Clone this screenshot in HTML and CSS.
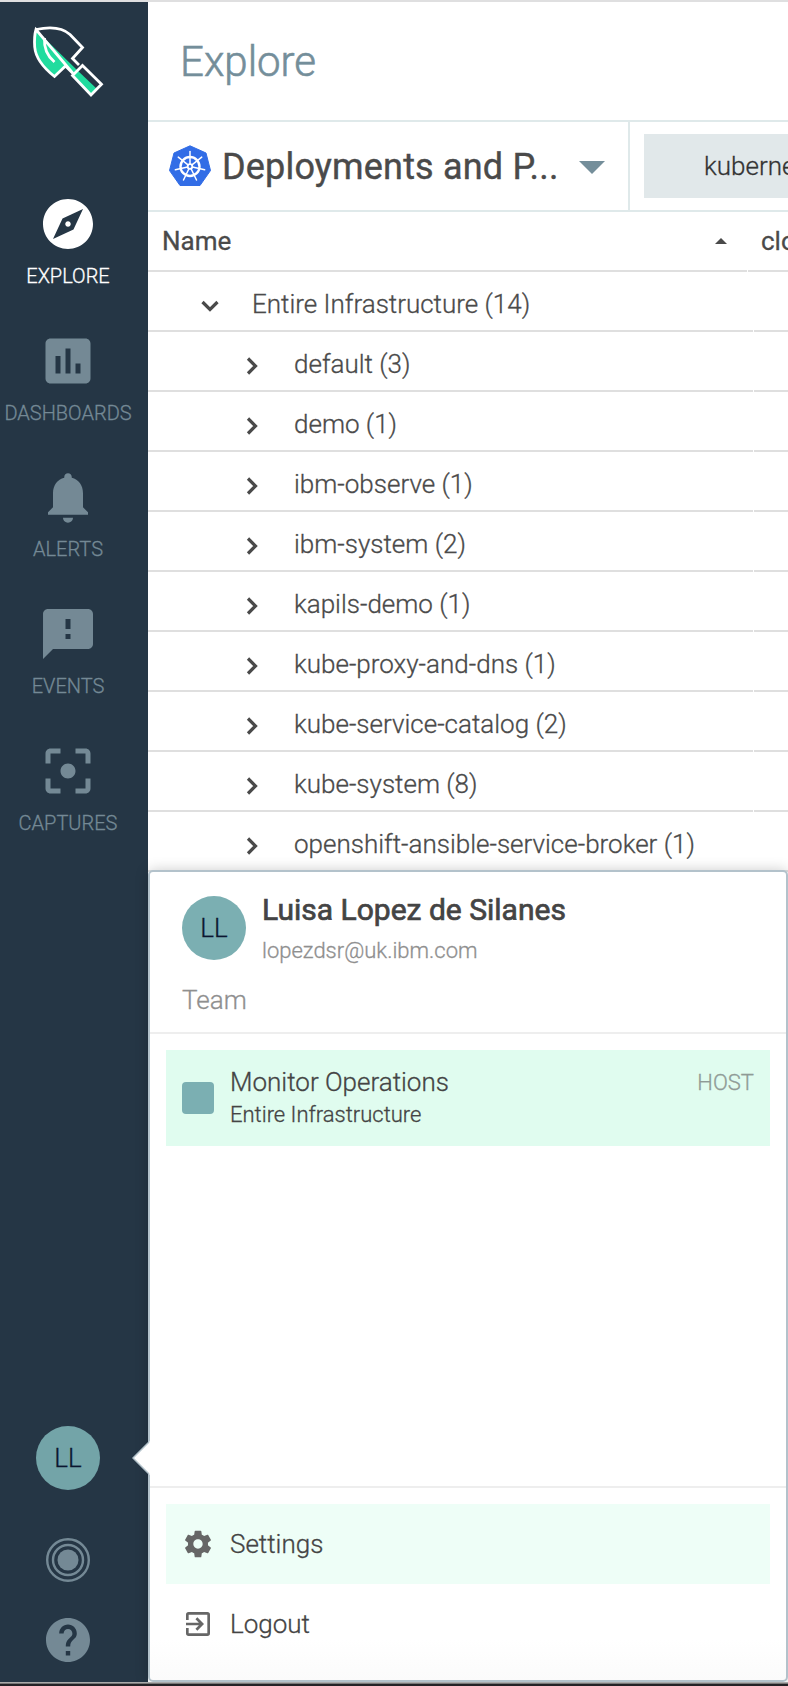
FILE: index.html
```html
<!DOCTYPE html>
<html lang="en">
<head>
<meta charset="utf-8">
<title>Explore</title>
<link rel="stylesheet" href="styles.css">
</head>
<body>
<div class="app">
  <nav class="sidebar">
    <svg class="logo" viewBox="0 0 80 80">
      <path d="M8 8 L49.500 48.500 L45 53 L37.500 44.500 L26.500 54.500 Q10 41 7 27 Q5.500 15 8 8Z" fill="#21dc9e"/>
      <path d="M44.500 53 L49.300 48.200 L69 67 L63 73Z" fill="#21dc9e"/>
      <path d="M8 7.500 Q31 2.500 42 12.500 L54.500 25.500 L44.500 36.500 L51 43 M45 51.500 L37.500 44 L26.500 54.500 Q8 40 6.700 25 Q6 14 8 7.500Z" fill="none" stroke="#fff" stroke-width="2.800"/>
      <path d="M54.500 43.500 L73.500 62.300 L63 73 L44.500 53.500Z" fill="none" stroke="#fff" stroke-width="2.800"/>
      <path d="M16.500 16 Q15.500 31 26.500 40" fill="none" stroke="#fff" stroke-width="2.800"/>
    </svg>
    <a class="nav-item active">
      <svg viewBox="0 0 24 24"><path d="M12 10.900c-.61 0-1.100.49-1.100 1.100s.49 1.100 1.100 1.100c.61 0 1.100-.49 1.100-1.100s-.49-1.100-1.100-1.100zM12 2C6.480 2 2 6.480 2 12s4.480 10 10 10 10-4.480 10-10S17.520 2 12 2zm2.190 12.190L6 18l3.810-8.190L18 6l-3.810 8.190z"/></svg>
      <span>EXPLORE</span>
    </a>
    <a class="nav-item">
      <svg viewBox="0 0 24 24"><path d="M19 3H5c-1.100 0-2 .9-2 2v14c0 1.100.9 2 2 2h14c1.100 0 2-.9 2-2V5c0-1.100-.9-2-2-2zM9 17H7v-7h2v7zm4 0h-2V7h2v10zm4 0h-2v-4h2v4z"/></svg>
      <span>DASHBOARDS</span>
    </a>
    <a class="nav-item">
      <svg viewBox="0 0 24 24"><path d="M10.010 20.300c0 1.100.89 1.990 1.990 1.990s1.990-.89 1.990-1.990h-3.980zM18 15.900V10.500c0-3.210-1.800-5.510-4.500-6.170V4c0-.83-.67-1.500-1.500-1.500s-1.500.67-1.500 1.500v.33C7.800 5 6 7.300 6 10.500V16.100l-2 2v1h16v-1l-2-2z"/></svg>
      <span>ALERTS</span>
    </a>
    <a class="nav-item">
      <svg viewBox="0 0 24 24"><path d="M20 2H4c-1.100 0-1.990.9-1.990 2L2 22l4-4h14c1.100 0 2-.9 2-2V4c0-1.100-.9-2-2-2zm-7 12h-2v-2h2v2zm0-4h-2V6h2v4z"/></svg>
      <span>EVENTS</span>
    </a>
    <a class="nav-item">
      <svg viewBox="0 0 24 24"><path d="M5 15H3v4c0 1.100.9 2 2 2h4v-2H5v-4zM5 5h4V3H5c-1.100 0-2 .9-2 2v4h2V5zm14-2h-4v2h4v4h2V5c0-1.100-.9-2-2-2zm0 16h-4v2h4c1.100 0 2-.9 2-2v-4h-2v4zM12 9c-1.660 0-3 1.340-3 3s1.340 3 3 3 3-1.340 3-3-1.340-3-3-3z"/></svg>
      <span>CAPTURES</span>
    </a>
    <div class="nav-bottom">
      <div class="avatar avatar-side">LL</div>
      <svg class="ring-icon" viewBox="0 0 44 44"><g fill="none" stroke="#748995" stroke-width="2.400"><circle cx="22" cy="22" r="20.800"/><circle cx="22" cy="22" r="15"/></g><circle cx="22" cy="22" r="10.500" fill="#748995"/></svg>
      <svg class="help-icon" viewBox="2 2 20 20"><path d="M12 2C6.480 2 2 6.480 2 12s4.480 10 10 10 10-4.480 10-10S17.520 2 12 2zm1 17h-2v-2h2v2zm2.070-7.750l-.9.920C13.450 12.900 13 13.500 13 15h-2v-.5c0-1.100.45-2.100 1.170-2.830l1.240-1.260c.37-.36.59-.86.59-1.410 0-1.100-.9-2-2-2s-2 .9-2 2H8c0-2.210 1.790-4 4-4s4 1.790 4 4c0 .88-.36 1.680-.93 2.250z"/></svg>
    </div>
  </nav>
  <main class="content">
    <header class="page-head"><h1>Explore</h1></header>
    <div class="toolbar">
      <div class="picker">
        <svg class="kube" viewBox="0 0 42 42">
          <path d="M21 .8 L37 8 L41.500 25.500 L31 40.500 H11 L.5 25.500 L5 8Z" fill="#326de6" stroke="#326de6" stroke-linejoin="round"/>
          <g fill="none" stroke="#fff">
            <circle cx="21" cy="21.500" r="9.500" stroke-width="2.400"/>
            <g stroke-width="1.500" stroke-linecap="round">
              <path d="M21 19V6.500"/>
              <path d="M21 19V6.500" transform="rotate(51.430 21 21.500)"/>
              <path d="M21 19V6.500" transform="rotate(102.860 21 21.500)"/>
              <path d="M21 19V6.500" transform="rotate(154.290 21 21.500)"/>
              <path d="M21 19V6.500" transform="rotate(205.710 21 21.500)"/>
              <path d="M21 19V6.500" transform="rotate(257.140 21 21.500)"/>
              <path d="M21 19V6.500" transform="rotate(308.570 21 21.500)"/>
            </g>
            <circle cx="21" cy="21.500" r="2.300" stroke-width="1.800"/>
          </g>
        </svg>
        <span class="picker-text">Deployments and P...</span>
        <span class="caret"></span>
      </div>
      <div class="filter-zone"><div class="chip">kubernetes</div></div>
    </div>
    <div class="row thead"><div class="cell">Name<span class="sort"></span></div><div class="cell next">cloud</div></div>
    <div class="row root"><div class="cell"><svg class="chev" viewBox="0 0 20 20"><path d="M2.500 6l7.500 7.500L17.500 6"/></svg>Entire Infrastructure (14)</div><div class="cell"></div></div>
    <div class="row"><div class="cell"><svg class="chev" viewBox="0 0 20 20"><path d="M6 2.500l7.500 7.500L6 17.500"/></svg>default (3)</div><div class="cell"></div></div>
    <div class="row"><div class="cell"><svg class="chev" viewBox="0 0 20 20"><path d="M6 2.500l7.500 7.500L6 17.500"/></svg>demo (1)</div><div class="cell"></div></div>
    <div class="row"><div class="cell"><svg class="chev" viewBox="0 0 20 20"><path d="M6 2.500l7.500 7.500L6 17.500"/></svg>ibm-observe (1)</div><div class="cell"></div></div>
    <div class="row"><div class="cell"><svg class="chev" viewBox="0 0 20 20"><path d="M6 2.500l7.500 7.500L6 17.500"/></svg>ibm-system (2)</div><div class="cell"></div></div>
    <div class="row"><div class="cell"><svg class="chev" viewBox="0 0 20 20"><path d="M6 2.500l7.500 7.500L6 17.500"/></svg>kapils-demo (1)</div><div class="cell"></div></div>
    <div class="row"><div class="cell"><svg class="chev" viewBox="0 0 20 20"><path d="M6 2.500l7.500 7.500L6 17.500"/></svg>kube-proxy-and-dns (1)</div><div class="cell"></div></div>
    <div class="row"><div class="cell"><svg class="chev" viewBox="0 0 20 20"><path d="M6 2.500l7.500 7.500L6 17.500"/></svg>kube-service-catalog (2)</div><div class="cell"></div></div>
    <div class="row"><div class="cell"><svg class="chev" viewBox="0 0 20 20"><path d="M6 2.500l7.500 7.500L6 17.500"/></svg>kube-system (8)</div><div class="cell"></div></div>
    <div class="row"><div class="cell"><svg class="chev" viewBox="0 0 20 20"><path d="M6 2.500l7.500 7.500L6 17.500"/></svg>openshift-ansible-service-broker (1)</div><div class="cell"></div></div>
  </main>
  <section class="menu">
    <svg class="pointer" viewBox="0 0 18 34"><path d="M18 0L1 17l17 17z" fill="#fff"/><path d="M17 1L1 17l16 16" fill="none" stroke="#b3c2cb" stroke-width="1.500"/></svg>
    <div class="profile">
      <div class="who">
        <div class="avatar">LL</div>
        <div><div class="name">Luisa Lopez de Silanes</div><div class="email">lopezdsr@uk.ibm.com</div></div>
      </div>
      <div class="team-label">Team</div>
    </div>
    <div class="teams">
      <div class="team">
        <span class="swatch"></span>
        <div class="team-info"><div class="team-name">Monitor Operations</div><div class="team-scope">Entire Infrastructure</div></div>
        <span class="host">HOST</span>
      </div>
    </div>
    <div class="actions">
      <div class="action selected"><svg viewBox="0 0 24 24"><path d="M19.430 12.980c.04-.32.070-.64.070-.98s-.03-.66-.07-.98l2.110-1.650c.19-.15.24-.42.12-.64l-2-3.460c-.12-.22-.39-.3-.61-.22l-2.490 1c-.52-.4-1.080-.73-1.690-.98l-.38-2.650C14.460 2.180 14.250 2 14 2h-4c-.25 0-.46.18-.49.420l-.38 2.650c-.61.25-1.170.59-1.690.98l-2.490-1c-.23-.09-.49 0-.61.22l-2 3.460c-.13.22-.07.49.12.64l2.110 1.650c-.04.32-.07.65-.07.98s.03.66.07.98l-2.110 1.650c-.19.15-.24.42-.12.64l2 3.460c.12.22.39.3.61.22l2.490-1c.52.4 1.080.73 1.690.98l.38 2.650c.03.24.24.42.49.42h4c.25 0 .46-.18.49-.42l.38-2.650c.61-.25 1.170-.59 1.690-.98l2.490 1c.23.09.49 0 .61-.22l2-3.460c.12-.22.07-.49-.12-.64l-2.110-1.650zM12 15.500c-1.930 0-3.500-1.570-3.500-3.500s1.570-3.500 3.500-3.500 3.500 1.570 3.500 3.500-1.570 3.500-3.500 3.500z"/></svg>Settings</div>
      <div class="action"><svg viewBox="0 0 24 24"><path d="M5 3h14q2 0 2 2v14q0 2-2 2H5q-2 0-2-2v-4h2v4h14V5H5v4H3V5q0-2 2-2zM3 11h9.670L10.090 8.410 11.500 7l5 5-5 5-1.410-1.410L12.670 13H3z"/></svg>Logout</div>
    </div>
  </section>
</div>
</body>
</html>
```
FILE: styles.css
```css
* { box-sizing: border-box; }
body { margin: 0; font-family: Roboto, "Liberation Sans", sans-serif; font-weight: 300; color: #4a4a4a; background: #fff; -webkit-text-stroke: .3px; }
.app {
  position: relative;
  display: flex;
  width: 788px;
  height: 1686px;
  overflow: hidden;
  border-top: 2px solid #dfdfe0;
}
.app::after {
  content: "";
  position: absolute;
  left: 0; right: 0; bottom: 0;
  height: 4px;
  background: linear-gradient(#aaa 0 1px, #777 1px 2px, #242226 2px);
}
.sidebar { width: 148px; flex: none; background: #253645; display: flex; flex-direction: column; padding-right: 12px; align-items: center; }
.logo { width: 80px; height: 80px; margin: 20px 0 90px; }
.nav-item { height: 136.700px; flex: none; display: flex; flex-direction: column; align-items: center; color: #748995; font-size: 20px; line-height: 24px; white-space: nowrap; }
.nav-item svg { width: 60px; height: 60px; fill: currentColor; margin: 2px 0 10px; }
.nav-item.active { color: #fff; }
.nav-bottom { margin-top: auto; display: flex; flex-direction: column; align-items: center; padding-bottom: 24px; }
.avatar { width: 64px; height: 64px; flex: none; border-radius: 50%; background: #7bafb2; color: #0b1630; font-size: 26px; line-height: 64px; text-align: center; }
.avatar-side { background: #73a4a8; }
.ring-icon { width: 44px; height: 44px; margin: 48px 0 36px; }
.help-icon { width: 44px; height: 44px; fill: #748995; }

.content { width: 640px; flex: none; }
.page-head { height: 120px; border-bottom: 2px solid #dfe9ea; padding: 35px 32px 0; }
h1 { margin: 0; font-size: 42px; font-weight: 300; line-height: 50px; color: #748e9a; -webkit-text-stroke: .6px; }
.toolbar { display: flex; height: 90px; border-bottom: 2px solid #dfe9ea; }
.picker { width: 482px; flex: none; display: flex; align-items: center; padding-left: 21px; border-right: 2px solid #dfe9ea; }
.kube { width: 42px; height: 42px; }
.picker-text { width: 338px; margin: 2px 0 0 11px; font-size: 36px; font-weight: 400; letter-spacing: .18px; white-space: nowrap; -webkit-text-stroke: .4px; }
.caret { margin: 3px 0 0 19px; border: 13px solid transparent; border-top-color: #748e9a; border-bottom: 0; }
.filter-zone { flex: 1; padding: 12px 0 0 14px; overflow: hidden; }
.chip { width: 260px; height: 64px; background: #e1e8ea; color: #333; padding-left: 60px; font-size: 26px; line-height: 64px; }
.row { display: flex; height: 60px; gap: 1px; font-size: 26px; line-height: 58px; white-space: nowrap; }
.cell { width: 605px; flex: none; display: flex; align-items: center; border-bottom: 2px solid #dfdfdf; padding: 6px 0 0 94px; }
.chev { width: 20px; height: 20px; margin: 3px 32px 0 0; fill: none; stroke: #4a4a4a; stroke-width: 3.200; }
.root .cell { padding-left: 52px; }
.root .chev { margin-right: 32px; }
.row.thead { font-weight: 400; line-height: 56px; }
.thead .cell { width: 599px; padding: 0 0 0 14px; }
.thead .cell.next { padding-left: 13px; }
.sort { margin: 0 20px 0 auto; border: 6px solid transparent; border-bottom-color: #4a4a4a; border-top: 0; }

.menu {
  position: absolute;
  left: 148px; top: 868px;
  width: 640px; height: 812px;
  display: flex; flex-direction: column;
  background: linear-gradient(#fff 95%, #fbfbfb);
  border: 2px solid #b3c2cb;
  border-radius: 5px;
  box-shadow: 0 0 14px rgba(0, 0, 0, .2);
}
.pointer { position: absolute; left: -18px; top: 569px; width: 18px; height: 34px; }
.profile { height: 162px; border-bottom: 2px solid #eee; padding: 24px 32px 0; }
.who { display: flex; gap: 16px; height: 64px; }
.name { font-size: 30px; font-weight: 400; line-height: 34px; margin-top: -3px; color: #444; -webkit-text-stroke: .7px; }
.email { font-size: 22px; line-height: 28px; margin-top: 10px; color: #8f8f8f; }
.team-label { font-size: 26px; line-height: 30px; margin-top: 25px; color: #8f8f8f; }
.teams { flex: 1; padding: 16px; }
.team { display: flex; height: 96px; padding: 0 16px; background: #e0fcef; color: #444; }
.swatch { width: 32px; height: 32px; border-radius: 4px; margin: 32px 16px 0 0; background: #7bafb2; }
.team-info { flex: 1; padding-top: 16px; }
.team-name { font-size: 26px; line-height: 32px; }
.team-scope { font-size: 22px; line-height: 34px; }
.host { font-size: 22px; line-height: 34px; padding-top: 16px; color: #8f9b96; }
.actions { height: 194px; border-top: 2px solid #eee; padding: 16px; }
.action { display: flex; align-items: center; height: 80px; padding-left: 16px; font-size: 26px; color: #444; }
.action svg { width: 32px; height: 32px; margin-right: 16px; fill: #666; }
.selected { background: #eefef7; }
```
